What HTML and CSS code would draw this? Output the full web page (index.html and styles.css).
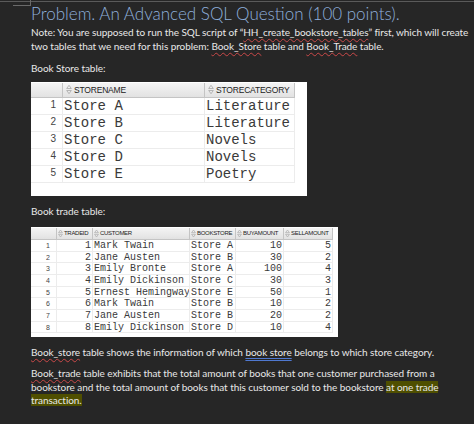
FILE: index.html
```html
<!DOCTYPE html>
<html>
<head>
<meta charset="utf-8">
<link rel="stylesheet" href="styles.css">
</head>
<body>
<div class="page">
  <div class="topline"></div>
  <div class="corner"></div>
  <h1 class="title">Problem. An Advanced SQL Question (100 points).</h1>
  <p class="note">Note: You are supposed to run the SQL script of “<span class="sp">HH_create_bookstore_tables</span>” first, which will create two tables that we need for this problem: <span class="sp">Book_Store</span> table and <span class="sp">Book_Trade</span> table.</p>
  <p class="label">Book Store table:</p>

  <div class="grid store">
    <div class="row head">
      <div class="c n"></div>
      <div class="c"><svg class="sort" viewBox="0 0 6 10"><path d="M3 0.8 L5.3 4 H0.7 Z M3 9.2 L5.3 6 H0.7 Z"/></svg>STORENAME</div>
      <div class="c"><svg class="sort" viewBox="0 0 6 10"><path d="M3 0.8 L5.3 4 H0.7 Z M3 9.2 L5.3 6 H0.7 Z"/></svg>STORECATEGORY</div>
    </div>
    <div class="row"><div class="c n">1</div><div class="c">Store A</div><div class="c">Literature</div></div>
    <div class="row"><div class="c n">2</div><div class="c">Store B</div><div class="c">Literature</div></div>
    <div class="row"><div class="c n">3</div><div class="c">Store C</div><div class="c">Novels</div></div>
    <div class="row"><div class="c n">4</div><div class="c">Store D</div><div class="c">Novels</div></div>
    <div class="row"><div class="c n">5</div><div class="c">Store E</div><div class="c">Poetry</div></div>
  </div>

  <p class="label label2">Book trade table:</p>

  <div class="grid trade">
    <div class="row head">
      <div class="c n"></div>
      <div class="c"><svg class="sort" viewBox="0 0 6 10"><path d="M3 0.8 L5.3 4 H0.7 Z M3 9.2 L5.3 6 H0.7 Z"/></svg>TRADEID</div>
      <div class="c"><svg class="sort" viewBox="0 0 6 10"><path d="M3 0.8 L5.3 4 H0.7 Z M3 9.2 L5.3 6 H0.7 Z"/></svg>CUSTOMER</div>
      <div class="c"><svg class="sort" viewBox="0 0 6 10"><path d="M3 0.8 L5.3 4 H0.7 Z M3 9.2 L5.3 6 H0.7 Z"/></svg>BOOKSTORE</div>
      <div class="c"><svg class="sort" viewBox="0 0 6 10"><path d="M3 0.8 L5.3 4 H0.7 Z M3 9.2 L5.3 6 H0.7 Z"/></svg>BUYAMOUNT</div>
      <div class="c"><svg class="sort" viewBox="0 0 6 10"><path d="M3 0.8 L5.3 4 H0.7 Z M3 9.2 L5.3 6 H0.7 Z"/></svg>SELLAMOUNT</div>
    </div>
    <div class="row"><div class="c n">1</div><div class="c r">1</div><div class="c">Mark Twain</div><div class="c">Store A</div><div class="c r">10</div><div class="c r">5</div></div>
    <div class="row"><div class="c n">2</div><div class="c r">2</div><div class="c">Jane Austen</div><div class="c">Store B</div><div class="c r">30</div><div class="c r">2</div></div>
    <div class="row"><div class="c n">3</div><div class="c r">3</div><div class="c">Emily Bronte</div><div class="c">Store A</div><div class="c r">100</div><div class="c r">4</div></div>
    <div class="row"><div class="c n">4</div><div class="c r">4</div><div class="c">Emily Dickinson</div><div class="c">Store C</div><div class="c r">30</div><div class="c r">3</div></div>
    <div class="row"><div class="c n">5</div><div class="c r">5</div><div class="c">Ernest Hemingway</div><div class="c">Store E</div><div class="c r">50</div><div class="c r">1</div></div>
    <div class="row"><div class="c n">6</div><div class="c r">6</div><div class="c">Mark Twain</div><div class="c">Store B</div><div class="c r">10</div><div class="c r">2</div></div>
    <div class="row"><div class="c n">7</div><div class="c r">7</div><div class="c">Jane Austen</div><div class="c">Store B</div><div class="c r">20</div><div class="c r">2</div></div>
    <div class="row"><div class="c n">8</div><div class="c r">8</div><div class="c">Emily Dickinson</div><div class="c">Store D</div><div class="c r">10</div><div class="c r">4</div></div>
  </div>

  <p class="para p1"><span class="sp">Book_store</span> table shows the information of which <span class="gr">book store</span> belongs to which store category.</p>
  <p class="para p2"><span class="sp">Book_trade</span> table exhibits that the total amount of books that one customer purchased from a bookstore and the total amount of books that this customer sold to the bookstore <span class="hl">at one trade transaction.</span></p>
</div>
</body>
</html>
```

FILE: styles.css
```css
html, body {
  margin: 0;
  padding: 0;
  background: #262626;
}
.page {
  position: relative;
  width: 474px;
  height: 424px;
  box-sizing: border-box;
  padding: 4.4px 0 0 31px;
  overflow: hidden;
  font-family: "Lato", "Open Sans", sans-serif;
  color: #e8e8e8;
}
.topline {
  position: absolute;
  left: 0;
  top: 1px;
  width: 474px;
  height: 1px;
  background: #5a5a5a;
}
.corner {
  position: absolute;
  left: 13px;
  top: 0;
  width: 17px;
  height: 5px;
  border-right: 1px solid #6a6a6a;
  border-bottom: 1px solid #6a6a6a;
}
.title {
  margin: 0;
  font-size: 17px;
  line-height: 20px;
  font-weight: 300;
  color: #8fb0dc;
}
.note, .label, .para {
  margin: 0;
  font-size: 10px;
  line-height: 13.5px;
  letter-spacing: -0.06px;
}
.note { margin-top: 2px; }
.label { margin-top: 8.5px; }
.label2 { margin-top: 9.4px; }
.p1 { margin-top: 9.4px; }
.p2 { margin-top: 7.5px; padding-right: 10px; }
.sp {
  text-decoration: underline wavy #c94848;
  text-decoration-thickness: 1px;
  text-underline-offset: 2px;
}
.gr {
  text-decoration: underline double #4f78d0;
  text-decoration-thickness: 1px;
  text-underline-offset: 2px;
}
.hl {
  background: #4f4f00;
}

/* grids */
.grid {
  background: #fff;
  color: #333;
}
.store {
  margin-top: 6.6px;
  width: 276px;
  height: 114px;
  padding-top: 1px;
  box-sizing: border-box;
}
.trade {
  margin-top: 8.1px;
  width: 307px;
  height: 110px;
  padding-top: 1px;
  box-sizing: border-box;
}
.row {
  display: grid;
}
.store .row {
  grid-template-columns: 32px 142px 90px;
  height: 17px;
}
.store .row.head { height: 15px; }
.trade .row {
  grid-template-columns: 26px 36px 97px 46px 48px 49px;
  height: 11.7px;
}
.trade .row.head { height: 12px; }
.c {
  display: flex;
  align-items: center;
  overflow: hidden;
  white-space: pre;
  box-sizing: border-box;
  border-right: 1px solid #ececec;
  border-bottom: 1px solid #ececec;
  font-family: "Liberation Mono", monospace;
  color: #3a3a3a;
}
.store .c { font-size: 14px; padding-left: 1px; }
.trade .c { font-size: 10px; padding-left: 1px; }
.c.r { justify-content: flex-end; padding-right: 1px; padding-left: 0; }
.c.n {
  justify-content: flex-end;
  font-family: "Liberation Sans", sans-serif;
  color: #444;
}
.store .c.n { font-size: 10px; padding-right: 6px; align-items: flex-start; padding-top: 1px; }
.trade .c.n { font-size: 7px; padding-right: 6px; }
.head .c {
  background: linear-gradient(#f4f4f4, #e2e2e2);
  border-right: 1px solid #c4c4c4;
  border-bottom: 1px solid #c4c4c4;
  font-family: "Liberation Sans", sans-serif;
  color: #222;
  letter-spacing: -0.2px;
}
.store .head .c { font-size: 8.5px; padding-left: 3px; }
.trade .head .c { font-size: 6px; padding-left: 1px; letter-spacing: -0.3px; }
.sort {
  fill: none;
  stroke: #a8a8a8;
  stroke-width: 0.8;
  flex: none;
}
.store .sort { width: 6px; height: 11px; margin-right: 2px; }
.trade .sort { width: 5px; height: 9px; margin-right: 1px; }
```
